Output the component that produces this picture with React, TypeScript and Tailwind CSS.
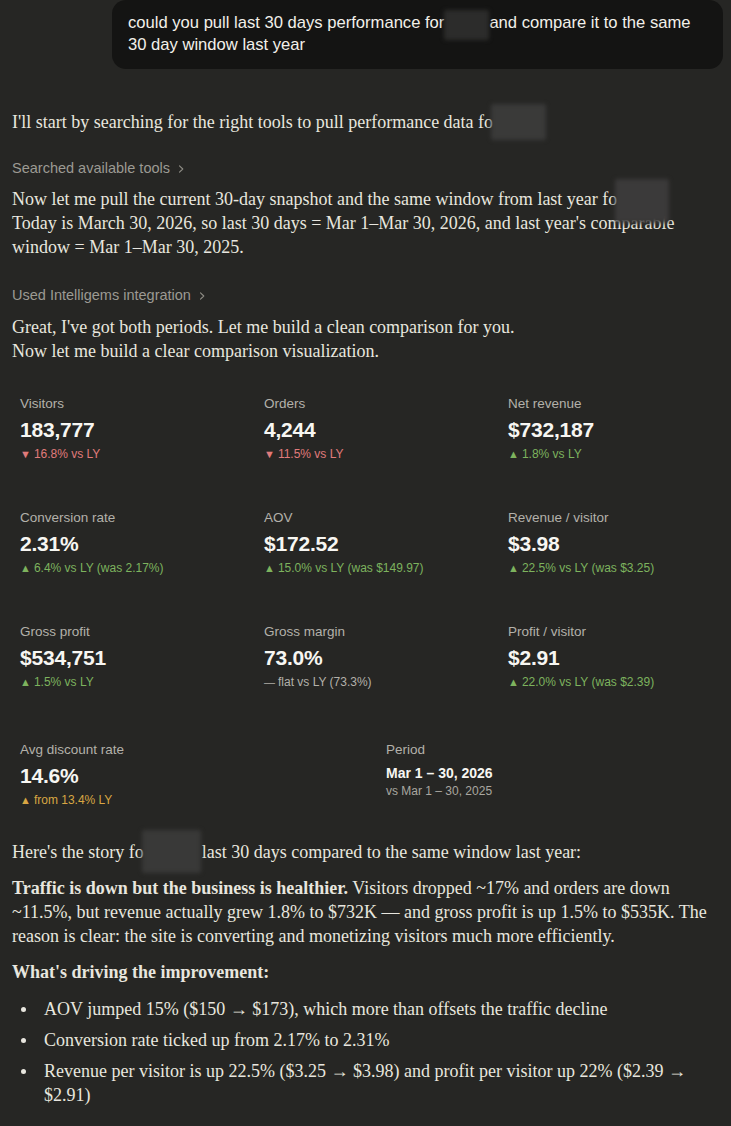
import React from "react";

const serif = { fontFamily: '"Liberation Serif", "DejaVu Serif", serif' };
const sans = { fontFamily: '"Liberation Sans", Arial, sans-serif' };

function Redact({ w, box }: { w: string; box: string }) {
  return (
    <span className={`relative inline-block align-baseline h-0 ${w}`}>
      <span className={`absolute blur-[2px] rounded-[2px] ${box}`} />
    </span>
  );
}

function Chevron() {
  return (
    <svg width="10" height="10" viewBox="0 0 10 10" className="inline-block ml-[6px] mb-[1px]" fill="none">
      <path d="M3.5 1.8 L6.8 5 L3.5 8.2" stroke="#8f8d86" strokeWidth="1.1" strokeLinecap="round" strokeLinejoin="round" />
    </svg>
  );
}

type Tone = "down" | "up" | "flat" | "warn";

function Metric({ label, value, delta, tone }: { label: string; value: string; delta: string; tone: Tone }) {
  const color =
    tone === "down" ? "text-[#e07b7b]" : tone === "up" ? "text-[#7db35e]" : tone === "warn" ? "text-[#d8a643]" : "text-[#b3b1aa]";
  const mark = tone === "down" ? "▼" : tone === "flat" ? "—" : "▲";
  return (
    <div className="px-[8px]" style={sans}>
      <div className="text-[13.5px] leading-[18px] text-[#b3b1aa]">{label}</div>
      <div className="mt-[3px] text-[21px] leading-[28px] font-semibold text-[#f7f6f2] tracking-[-0.2px]">{value}</div>
      <div className={`mt-[2px] text-[12px] leading-[16px] ${color}`}>
        <span className="text-[11px] mr-[3px]">{mark}</span>
        {delta}
      </div>
    </div>
  );
}

function Dot() {
  return <span className="mt-[10px] ml-[9px] mr-[18px] w-[5px] h-[5px] shrink-0 rounded-full bg-[#e8e6df]" />;
}

export default function App() {
  return (
    <div className="min-h-[1126px] w-full bg-[#262624] text-[#e8e6df] overflow-hidden">
      {/* user bubble */}
      <div className="flex justify-end pr-[8px]">
        <div
          className="w-[611px] rounded-[14px] bg-[#141413] pl-[16px] pr-[12px] pt-[12px] pb-[13px] text-[16.6px] leading-[22px] text-[#f2f0ea]"
          style={sans}
        >
          could you pull last 30 days performance for
          <Redact w="w-[45px]" box="-top-[18px] left-[0px] w-[45px] h-[30px] bg-[#2c2c2b]" />
          and compare it to the same
          <br />
          30 day window last year
        </div>
      </div>

      <div className="px-[12px]">
        <p className="mt-[41px] text-[18px] leading-[24px]" style={serif}>
          I'll start by searching for the right tools to pull performance data fo
          <Redact w="w-[1px]" box="-top-[24px] -left-[2px] w-[55px] h-[36px] bg-[#3a3a39]" />
        </p>

        <div className="mt-[24px] text-[14.5px] leading-[20px] text-[#9c9a93]" style={sans}>
          Searched available tools
          <Chevron />
        </div>

        <p className="mt-[9px] text-[18px] leading-[24px]" style={serif}>
          Now let me pull the current 30-day snapshot and the same window from last year fo
          <Redact w="w-[1px]" box="-top-[26px] -left-[2px] w-[54px] h-[44px] bg-[#3b3a3a]" />
          <br />
          Today is March 30, 2026, so last 30 days = Mar 1–Mar 30, 2026, and last year's comparable window = Mar 1–Mar
          30, 2025.
        </p>

        <div className="mt-[26px] text-[14.5px] leading-[20px] text-[#9c9a93]" style={sans}>
          Used Intelligems integration
          <Chevron />
        </div>

        <p className="mt-[10px] text-[18px] leading-[24px]" style={serif}>
          Great, I've got both periods. Let me build a clean comparison for you.
          <br />
          Now let me build a clear comparison visualization.
        </p>
      </div>

      {/* metrics */}
      <div className="ml-[12px] mt-[32px] grid grid-cols-3 gap-x-[13px] gap-y-[47px]">
        <Metric label="Visitors" value="183,777" delta="16.8% vs LY" tone="down" />
        <Metric label="Orders" value="4,244" delta="11.5% vs LY" tone="down" />
        <Metric label="Net revenue" value="$732,187" delta="1.8% vs LY" tone="up" />
        <Metric label="Conversion rate" value="2.31%" delta="6.4% vs LY (was 2.17%)" tone="up" />
        <Metric label="AOV" value="$172.52" delta="15.0% vs LY (was $149.97)" tone="up" />
        <Metric label="Revenue / visitor" value="$3.98" delta="22.5% vs LY (was $3.25)" tone="up" />
        <Metric label="Gross profit" value="$534,751" delta="1.5% vs LY" tone="up" />
        <Metric label="Gross margin" value="73.0%" delta="flat vs LY (73.3%)" tone="flat" />
        <Metric label="Profit / visitor" value="$2.91" delta="22.0% vs LY (was $2.39)" tone="up" />
      </div>
      <div className="ml-[12px] mt-[51px] grid grid-cols-2 gap-x-[13px]">
        <Metric label="Avg discount rate" value="14.6%" delta="from 13.4% LY" tone="warn" />
        <div className="px-[8px]" style={sans}>
          <div className="text-[13.5px] leading-[18px] text-[#b3b1aa]">Period</div>
          <div className="mt-[5px] text-[14px] leading-[18px] font-bold text-[#f7f6f2]">Mar 1 – 30, 2026</div>
          <div className="mt-[1px] text-[12px] leading-[16px] text-[#a9a7a0]">vs Mar 1 – 30, 2025</div>
        </div>
      </div>

      <div className="px-[12px] text-[18px] leading-[24px]" style={serif}>
        <p className="mt-[32px]">
          Here's the story fo
          <Redact w="w-[58px]" box="-top-[28px] -left-[2px] w-[59px] h-[43px] bg-[#393938]" />
          last 30 days compared to the same window last year:
        </p>
        <p className="mt-[12px]">
          <span className="font-bold">Traffic is down but the business is healthier.</span> Visitors dropped ~17% and
          orders are down ~11.5%, but revenue actually grew 1.8% to $732K — and gross profit is up 1.5% to $535K. The
          reason is clear: the site is converting and monetizing visitors much more efficiently.
        </p>
        <p className="mt-[12px] font-bold">What's driving the improvement:</p>
        <ul className="mt-[13px] flex flex-col gap-[7px]">
          <li className="flex">
            <Dot />
            <span>AOV jumped 15% ($150 → $173), which more than offsets the traffic decline</span>
          </li>
          <li className="flex">
            <Dot />
            <span>Conversion rate ticked up from 2.17% to 2.31%</span>
          </li>
          <li className="flex">
            <Dot />
            <span>Revenue per visitor is up 22.5% ($3.25 → $3.98) and profit per visitor up 22% ($2.39 → $2.91)</span>
          </li>
        </ul>
      </div>
    </div>
  );
}
